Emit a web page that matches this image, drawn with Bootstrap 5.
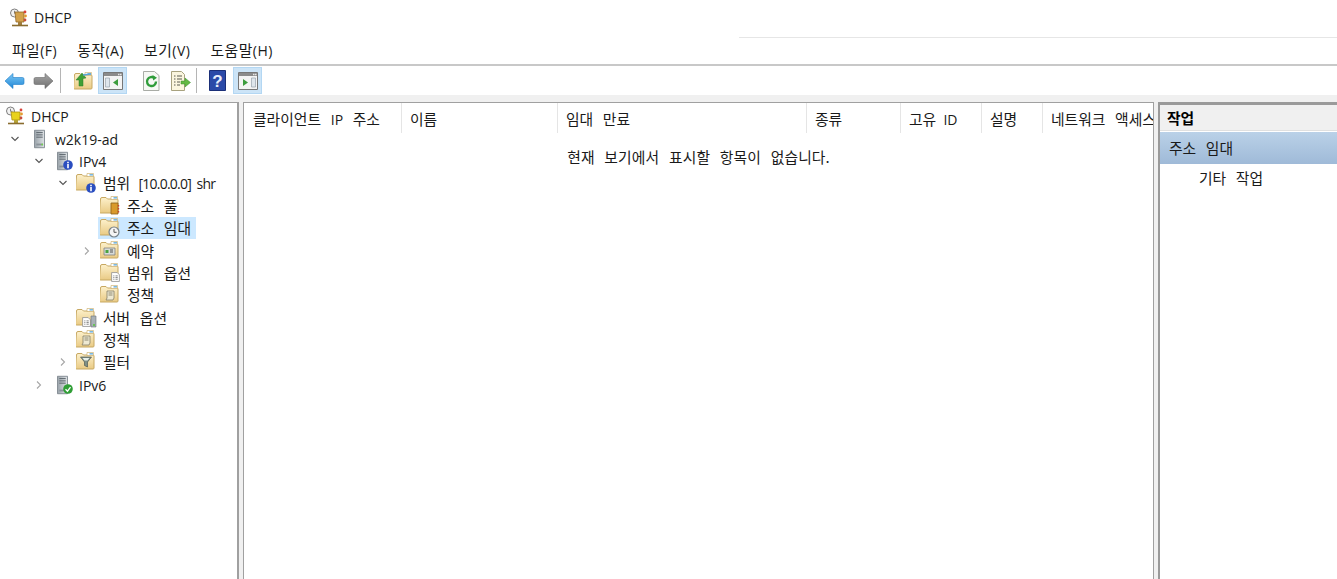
<!DOCTYPE html>
<html lang="ko">
<head>
    <meta charset="UTF-8">
    <meta name="viewport" content="width=device-width, initial-scale=1">
    <title>DHCP</title>
    <link href="https://cdn.jsdelivr.net/npm/bootstrap@5.3.0/dist/css/bootstrap.min.css" rel="stylesheet">
    <style>
        html, body {
            height: 579px;
            overflow: hidden;
            background: #fff;
        }
        body {
            font-family: "Noto Sans CJK KR", "Open Sans", sans-serif;
            font-size: 14.8px;
            line-height: 20px;
            word-spacing: 5.5px;
            color: #1a1a1a;
        }
        .lat {
            font-family: "Open Sans", sans-serif;
            font-size: 14px;
            word-spacing: 0;
        }
        .tight { letter-spacing: -.75px; word-spacing: 2.5px; }
        .scope-name { word-spacing: 4px; }
        .mmc-title {
            height: 38px;
            padding: 8px 0 0 9px;
            gap: 5px;
            position: relative;
        }
        .mmc-title::after {
            content: "";
            position: absolute;
            left: 739px;
            right: 0;
            bottom: 0;
            border-bottom: 1px solid #e6e6e6;
        }
        .mmc-menu {
            height: 28px;
            padding: 2px 0 0 12px;
            gap: 20px;
            letter-spacing: .5px;
            border-bottom: 2px solid #c8c8c8;
        }
        .mmc-tools {
            height: 29px;
            align-items: center;
        }
        .tool-btn {
            width: 29px;
            height: 27px;
            display: flex;
            align-items: center;
            justify-content: center;
            border: 1px solid transparent;
        }
        .tool-on {
            background: #cce4f7;
            border-color: #b3d7f3;
        }
        .tool-sep {
            width: 1px;
            height: 25px;
            background: #b5b5b5;
            margin: 0 8px 0 2px;
        }
        .tool-sep2 { margin: 0 6px 0 1px; }
        .tool-gap { width: 10px; }
        .tool-gap2 { width: 1px; }
        .mmc-body {
            height: 484px;
            background: #f0f0f0;
            padding-top: 7px;
            gap: 4px;
        }
        .pane {
            background: #fff;
            border: 1px solid #a0a0a0;
            border-bottom: 0;
        }
        .pane-tree {
            width: 239px;
            border-width: 1px 2px 0 0;
            padding-top: 2px;
        }
        .pane-list { width: 911px; }
        .pane-act {
            flex: 1;
            border-width: 3px 0 0 2px;
            border-color: #9a9a9a;
        }
        .node {
            height: 22.4px;
            align-items: center;
            white-space: nowrap;
        }
        .node > .lat { padding-top: 2px; }
        .lv0 { padding-left: 5px; }
        .lv1 { padding-left: 10px; }
        .lv2 { padding-left: 34px; }
        .lv3 { padding-left: 58px; }
        .lv4 { padding-left: 82px; }
        .twist {
            width: 21px;
            flex: none;
            display: flex;
        }
        .lv3 .twist, .lv4 .twist { width: 18px; }
        .pic {
            width: 24px;
            flex: none;
            display: flex;
        }
        .lv0 .pic { width: 26px; }
        .lv3 .pic, .lv4 .pic { width: 27px; }
        .pick {
            background: #cce8ff;
            margin-left: -2px;
            padding: 0 5px 0 2px;
            height: 22px;
            align-items: center;
        }
        .hdr-cell {
            padding: 6px 0 0 8px;
            height: 30px;
            border-right: 1px solid #e5e5e5;
            flex: none;
            overflow: hidden;
            white-space: nowrap;
        }
        .w1 { width: 158px; padding-left: 9px; }
        .w2 { width: 156px; }
        .w3 { width: 249px; }
        .w4 { width: 94px; }
        .w5 { width: 81px; word-spacing: 3px; }
        .w6 { width: 61px; }
        .w7 { width: 110px; border-right: 0; }
        .no-items {
            text-align: center;
            margin-top: 14px;
            letter-spacing: .1px;
        }
        .act-head {
            height: 26px;
            background: #f0f0f0;
            border-bottom: 1px solid #e0e0e0;
            padding: 3px 0 0 7px;
            font-weight: 700;
            color: #000;
        }
        .act-sel {
            height: 32px;
            margin-top: 1px;
            background: linear-gradient(#bad1e8, #9fbad8);
            padding: 6px 0 0 9px;
        }
        .act-sub { padding: 4px 0 0 39px; }
    </style>
</head>
<body>

<svg width="0" height="0" class="d-block position-absolute">
    <defs>
        <linearGradient id="fold" x1="0" y1="0" x2="0" y2="1">
            <stop offset="0" stop-color="#fdf1cc"/>
            <stop offset="1" stop-color="#e9ca84"/>
        </linearGradient>
        <linearGradient id="blueArrow" x1="0" y1="0" x2="0" y2="1">
            <stop offset="0" stop-color="#7cc8f5"/>
            <stop offset="1" stop-color="#1f86d6"/>
        </linearGradient>
        <linearGradient id="grayArrow" x1="0" y1="0" x2="0" y2="1">
            <stop offset="0" stop-color="#a8a8a8"/>
            <stop offset="1" stop-color="#6e6e6e"/>
        </linearGradient>
        <linearGradient id="srv" x1="0" y1="0" x2="1" y2="0">
            <stop offset="0" stop-color="#9aa3aa"/>
            <stop offset="1" stop-color="#dfe3e6"/>
        </linearGradient>
        <symbol id="folder" viewBox="0 0 20 18">
            <path d="M.5 3q0-1.500 1.500-1.500h4l1.500 1.500h9.500q1 0 1 1v12q0 1-1 1h-16.500q-1 0-1-1z" fill="url(#fold)" stroke="#c7a862"/>
            <path d="M11 .5h6.500v3h-6.500z" fill="#fff" stroke="#c7a862" stroke-width=".6"/>
            <path d="M13.500 1.200h3.500v1.300h-3.500z" fill="#5aa7d8"/>
        </symbol>
        <symbol id="clockbadge" viewBox="0 0 12 12">
            <circle cx="6" cy="6" r="5" fill="#f4f4f4" stroke="#77828a" stroke-width="1.200"/>
            <path d="M6 3v3.300h2.600" fill="none" stroke="#555" stroke-width="1"/>
        </symbol>
        <symbol id="dhcpicon" viewBox="0 0 20 20">
            <circle cx="5.500" cy="5" r="4" fill="#f2f2f2" stroke="#7d7d7d"/>
            <path d="M5.500 2.800v2.500h2" fill="none" stroke="#666" stroke-width=".8"/>
            <path d="M6 6h9v8h-8z" fill="#e8d21c" stroke="#a98f14" stroke-width=".8"/>
            <path d="M9 14h4v3h-4z" fill="#b6a335"/>
            <path d="M3 17.500h16" stroke="#8a6d2f" stroke-width="1.600"/>
            <circle cx="16" cy="4" r="1.400" fill="#d9433a"/>
            <circle cx="16.500" cy="8" r="1.400" fill="#e59a2d"/>
            <circle cx="16" cy="12" r="1.400" fill="#c84b3c"/>
        </symbol>
        <symbol id="titleicon" viewBox="0 0 20 20">
            <circle cx="5.500" cy="5" r="4" fill="#f2f2f2" stroke="#7d7d7d"/>
            <path d="M5.500 2.800v2.500h2" fill="none" stroke="#666" stroke-width=".8"/>
            <path d="M6 4h9v10h-8z" fill="#d3a24c" stroke="#93692a" stroke-width=".8"/>
            <path d="M9 14h4v3h-4z" fill="#a27d3c"/>
            <path d="M3 17.500h16" stroke="#8a6d2f" stroke-width="1.600"/>
            <circle cx="16" cy="4" r="1.400" fill="#d9433a"/>
            <circle cx="16.500" cy="8" r="1.400" fill="#e59a2d"/>
            <circle cx="16" cy="12" r="1.400" fill="#c84b3c"/>
        </symbol>
        <symbol id="server" viewBox="0 0 12 20">
            <path d="M.5 .5h11v19h-11z" fill="url(#srv)" stroke="#7e878e"/>
            <path d="M2.500 3h7M2.500 5.500h7M2.500 8h7" stroke="#555e66" stroke-width="1"/>
            <path d="M2.500 16h7" stroke="#8a9299" stroke-width="2"/>
            <circle cx="9" cy="16" r="1" fill="#6fd44a"/>
        </symbol>
        <symbol id="infodot" viewBox="0 0 10 10">
            <circle cx="5" cy="5" r="4.800" fill="#2a4ec0"/>
            <path d="M4.200 1.800h1.600v1.500h-1.600zM4.200 4h1.600v4.200h-1.600z" fill="#fff"/>
        </symbol>
        <symbol id="okdot" viewBox="0 0 10 10">
            <circle cx="5" cy="5" r="4.800" fill="#2f9e35"/>
            <path d="M2.500 5.200l2 2 3-4" fill="none" stroke="#fff" stroke-width="1.300"/>
        </symbol>
        <symbol id="doc" viewBox="0 0 8 9">
            <path d="M.5 .5h5l2 2v6h-7z" fill="#fff" stroke="#8e8e8e" stroke-width=".7"/>
            <path d="M2 3.500h1M4 3.500h2M2 5h1M4 5h2M2 6.500h1M4 6.500h2" stroke="#666" stroke-width=".7"/>
        </symbol>
        <symbol id="paneicon" viewBox="0 0 20 18">
            <path d="M.5 .5h19v17h-19z" fill="#f4f4f4" stroke="#777"/>
            <path d="M1 1h18v3h-18z" fill="#8b8b8b"/>
            <path d="M15 1.800h1.500v1.400h-1.500zM17 1.800h1.500v1.400h-1.500z" fill="#e8e8e8"/>
        </symbol>
    </defs>
</svg>

<header class="mmc-title d-flex align-items-start">
    <svg width="20" height="20"><use href="#titleicon"/></svg>
    <span class="lat">DHCP</span>
</header>

<nav class="mmc-menu d-flex">
    <span>파일<span class="lat">(F)</span></span>
    <span>동작<span class="lat">(A)</span></span>
    <span>보기<span class="lat">(V)</span></span>
    <span>도움말<span class="lat">(H)</span></span>
</nav>

<div class="mmc-tools d-flex">
    <div class="tool-btn">
        <svg width="21" height="18" viewBox="0 0 21 18"><path d="M1 9l8-7.500v4h9.500q1.500 0 1.500 1.500v4q0 1.500-1.500 1.500h-9.500v4z" fill="url(#blueArrow)" stroke="#1c7cc8" stroke-width=".6"/></svg>
    </div>
    <div class="tool-btn">
        <svg width="21" height="18" viewBox="0 0 21 18"><path d="M20 9l-8-7.500v4h-9.500q-1.500 0-1.500 1.500v4q0 1.500 1.500 1.500h9.500v4z" fill="url(#grayArrow)" stroke="#6a6a6a" stroke-width=".6"/></svg>
    </div>
    <div class="tool-sep"></div>
    <div class="tool-btn">
        <svg width="20" height="19" viewBox="0 0 20 19">
            <use href="#folder" y="1" width="20" height="18"/>
            <path d="M5 15v-6h-3l6-7 4 5-3 .5v7.500z" fill="#3f9f35" stroke="#2c7d28" stroke-width=".5"/>
            <path d="M9 4l8-1" stroke="#5aa7d8" stroke-width="1.500"/>
        </svg>
    </div>
    <div class="tool-btn tool-on">
        <svg width="20" height="18" viewBox="0 0 20 18">
            <use href="#paneicon" width="20" height="18"/>
            <path d="M2.500 6h4v9h-4z" fill="#dfe6ec" stroke="#8b97a3" stroke-width=".6"/>
            <path d="M15 7v7l-5-3.500z" fill="#3d9c3d"/>
        </svg>
    </div>
    <div class="tool-gap"></div>
    <div class="tool-btn">
        <svg width="17" height="20" viewBox="0 0 17 20">
            <path d="M.5 .5h11l4.500 4v15h-15.500z" fill="#f6f8f4" stroke="#a9aca6"/>
            <path d="M13 10.500a4.500 4.500 0 1 1-1.500-3.300" fill="none" stroke="#2f9c3a" stroke-width="2.400"/>
            <path d="M9.500 4l4.500 2.800-3.800 2.800z" fill="#2f9c3a"/>
        </svg>
    </div>
    <div class="tool-btn">
        <svg width="20" height="20" viewBox="0 0 20 20">
            <path d="M.5 .5h10l3 3v16h-13z" fill="#fbf6df" stroke="#a8a27f"/>
            <path d="M3 5h1.500M6 5h5M3 8h1.500M6 8h5M3 11h1.500M6 11h3M3 14h1.500M6 14h3" stroke="#5b5b50"/>
            <path d="M10 10h4v-3l5.500 4.500-5.500 4.500v-3h-4z" fill="#63b944" stroke="#3d8f2c" stroke-width=".5"/>
        </svg>
    </div>
    <div class="tool-sep tool-sep2"></div>
    <div class="tool-btn">
        <svg width="17" height="21" viewBox="0 0 17 21">
            <path d="M.5 .5h16v20h-16z" fill="#2b4aa8" stroke="#1b2f78"/>
            <text x="8.500" y="17" text-anchor="middle" font-family="Liberation Sans, sans-serif" font-size="17" font-weight="700" fill="#e8eefc">?</text>
        </svg>
    </div>
    <div class="tool-gap2"></div>
    <div class="tool-btn tool-on">
        <svg width="20" height="18" viewBox="0 0 20 18">
            <use href="#paneicon" width="20" height="18"/>
            <path d="M13.500 6h4v9h-4z" fill="#dfe6ec" stroke="#8b97a3" stroke-width=".6"/>
            <path d="M5 7v7l5-3.500z" fill="#3d9c3d"/>
        </svg>
    </div>
</div>

<main class="mmc-body d-flex">
    <aside class="pane pane-tree">
        <div class="node d-flex lv0">
            <span class="pic"><svg width="20" height="20"><use href="#dhcpicon"/></svg></span>
            <span class="lat">DHCP</span>
        </div>
        <div class="node d-flex lv1">
            <span class="twist"><svg width="10" height="10" viewBox="0 0 10 10"><path d="M1.500 3l3.500 3.500 3.500-3.500" fill="none" stroke="#555" stroke-width="1.100"/></svg></span>
            <span class="pic"><svg width="20" height="20"><use href="#server" x="3" width="11" height="20"/></svg></span>
            <span class="lat">w2k19-ad</span>
        </div>
        <div class="node d-flex lv2">
            <span class="twist"><svg width="10" height="10" viewBox="0 0 10 10"><path d="M1.500 3l3.500 3.500 3.500-3.500" fill="none" stroke="#555" stroke-width="1.100"/></svg></span>
            <span class="pic"><svg width="20" height="20"><use href="#server" x="2" width="11" height="20"/><use href="#infodot" x="8" y="9" width="10" height="10"/></svg></span>
            <span class="lat">IPv4</span>
        </div>
        <div class="node d-flex lv3">
            <span class="twist"><svg width="10" height="10" viewBox="0 0 10 10"><path d="M1.500 3l3.500 3.500 3.500-3.500" fill="none" stroke="#555" stroke-width="1.100"/></svg></span>
            <span class="pic"><svg width="21" height="20"><use href="#folder" width="20" height="18"/><use href="#infodot" x="10" y="10" width="10" height="10"/></svg></span>
            <span class="scope-name">범위 <span class="lat tight">[10.0.0.0] shr</span></span>
        </div>
        <div class="node d-flex lv4">
            <span class="twist"></span>
            <span class="pic"><svg width="21" height="20"><use href="#folder" width="20" height="18"/><path d="M11 7h7v11h-7z" fill="#d99a2c" stroke="#8a5f1c" stroke-width=".8"/><path d="M18.500 9v1.500M18.500 12v1.500M18.500 15v1.500" stroke="#c8452e" stroke-width="1.400"/></svg></span>
            <span>주소 풀</span>
        </div>
        <div class="node d-flex lv4">
            <span class="twist"></span>
            <span class="d-flex pick">
                <span class="pic"><svg width="21" height="20"><use href="#folder" width="20" height="18"/><use href="#clockbadge" x="8" y="8" width="12" height="12"/></svg></span>
                <span>주소 임대</span>
            </span>
        </div>
        <div class="node d-flex lv4">
            <span class="twist"><svg width="10" height="10" viewBox="0 0 10 10"><path d="M3 1.500l3.500 3.500-3.500 3.500" fill="none" stroke="#a6a6a6" stroke-width="1.100"/></svg></span>
            <span class="pic"><svg width="21" height="20"><use href="#folder" width="20" height="18"/><path d="M4 7h11v7h-11z" fill="#d8dcd8" stroke="#777" stroke-width=".7"/><path d="M5.500 9h3v3h-3z" fill="#49a33f"/><path d="M10 9h3M10 11h3" stroke="#555"/></svg></span>
            <span>예약</span>
        </div>
        <div class="node d-flex lv4">
            <span class="twist"></span>
            <span class="pic"><svg width="21" height="20"><use href="#folder" width="20" height="18"/><use href="#doc" x="11" y="9" width="9" height="10"/></svg></span>
            <span>범위 옵션</span>
        </div>
        <div class="node d-flex lv4">
            <span class="twist"></span>
            <span class="pic"><svg width="21" height="20"><use href="#folder" width="20" height="18"/><path d="M7 6h7v7l-1 2h-7l1-2z" fill="#eee9d2" stroke="#847f68" stroke-width=".8"/><path d="M8.500 8h4M8.500 10h4" stroke="#77725c" stroke-width=".8"/></svg></span>
            <span>정책</span>
        </div>
        <div class="node d-flex lv3">
            <span class="twist"></span>
            <span class="pic"><svg width="21" height="20"><use href="#folder" width="20" height="18"/><use href="#doc" x="6" y="9" width="9" height="10"/><path d="M15 8h5v11h-5z" fill="#a9b1b7" stroke="#6b747b" stroke-width=".6"/><circle cx="18" cy="17" r="1" fill="#55c93a"/></svg></span>
            <span>서버 옵션</span>
        </div>
        <div class="node d-flex lv3">
            <span class="twist"></span>
            <span class="pic"><svg width="21" height="20"><use href="#folder" width="20" height="18"/><path d="M7 6h7v7l-1 2h-7l1-2z" fill="#eee9d2" stroke="#847f68" stroke-width=".8"/><path d="M8.500 8h4M8.500 10h4" stroke="#77725c" stroke-width=".8"/></svg></span>
            <span>정책</span>
        </div>
        <div class="node d-flex lv3">
            <span class="twist"><svg width="10" height="10" viewBox="0 0 10 10"><path d="M3 1.500l3.500 3.500-3.500 3.500" fill="none" stroke="#a6a6a6" stroke-width="1.100"/></svg></span>
            <span class="pic"><svg width="21" height="20"><use href="#folder" width="20" height="18"/><path d="M4.500 5h11l-4 5v5l-3-1.500v-3.500z" fill="#7f8f86" stroke="#505a54" stroke-width=".7"/><path d="M6.500 6h7l-2 2.500h-3z" fill="#e7efe9"/></svg></span>
            <span>필터</span>
        </div>
        <div class="node d-flex lv2">
            <span class="twist"><svg width="10" height="10" viewBox="0 0 10 10"><path d="M3 1.500l3.500 3.500-3.500 3.500" fill="none" stroke="#a6a6a6" stroke-width="1.100"/></svg></span>
            <span class="pic"><svg width="20" height="20"><use href="#server" x="2" width="11" height="20"/><use href="#okdot" x="8" y="9" width="10" height="10"/></svg></span>
            <span class="lat">IPv6</span>
        </div>
    </aside>

    <section class="pane pane-list">
        <div class="d-flex">
            <div class="hdr-cell w1">클라이언트 <span class="lat">IP</span> 주소</div>
            <div class="hdr-cell w2">이름</div>
            <div class="hdr-cell w3">임대 만료</div>
            <div class="hdr-cell w4">종류</div>
            <div class="hdr-cell w5">고유 <span class="lat">ID</span></div>
            <div class="hdr-cell w6">설명</div>
            <div class="hdr-cell w7">네트워크 액세스</div>
        </div>
        <div class="no-items">현재 보기에서 표시할 항목이 없습니다.</div>
    </section>

    <aside class="pane pane-act">
        <div class="act-head">작업</div>
        <div class="act-sel">주소 임대</div>
        <div class="act-sub">기타 작업</div>
    </aside>
</main>

<script src="https://cdn.jsdelivr.net/npm/bootstrap@5.3.0/dist/js/bootstrap.bundle.min.js"></script>
</body>
</html>
